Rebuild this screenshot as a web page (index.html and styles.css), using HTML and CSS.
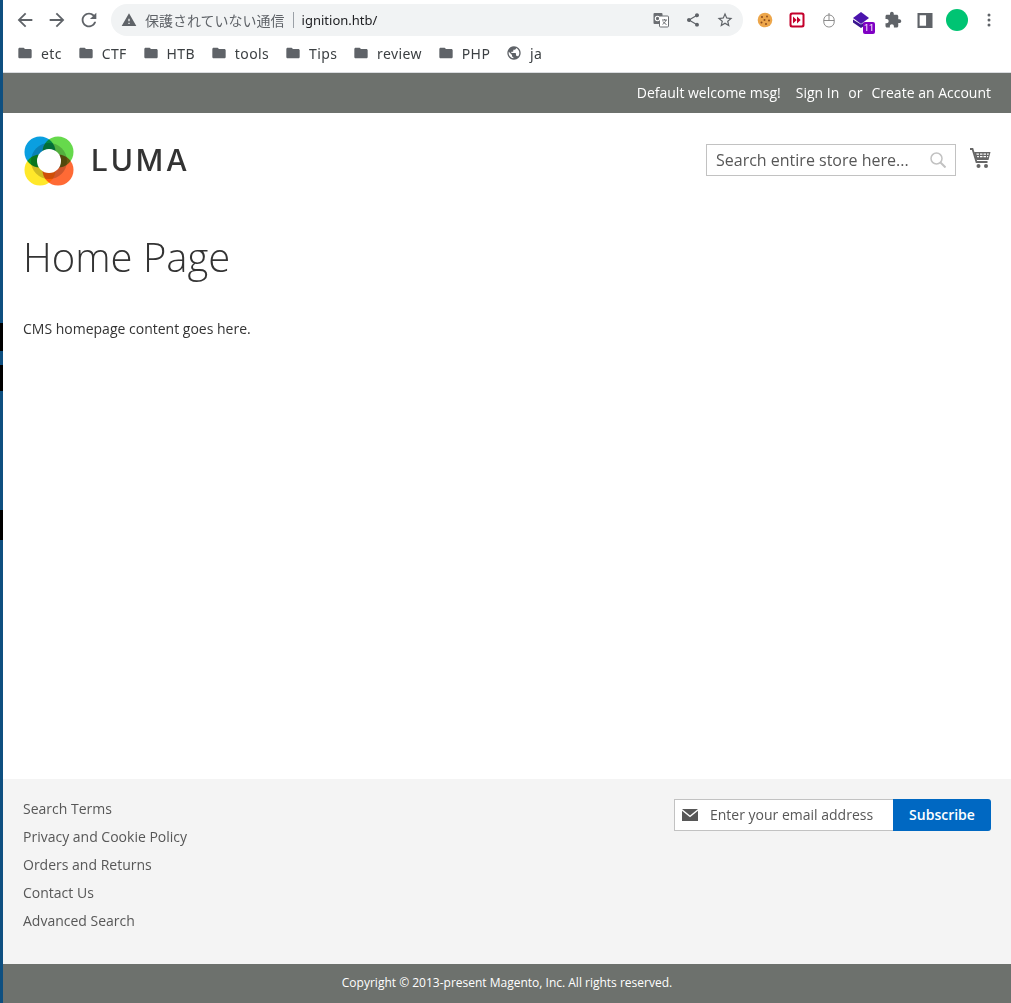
FILE: index.html
```html
<!DOCTYPE html>
<html lang="ja">
<head>
<meta charset="utf-8">
<title>Home Page</title>
<link rel="stylesheet" href="styles.css">
</head>
<body>
<div class="desktop-edge">
  <div class="edge-blue e1"></div><div class="edge-black e2"></div><div class="edge-blue e3"></div><div class="edge-black e4"></div><div class="edge-blue e5"></div><div class="edge-black e6"></div><div class="edge-blue e7"></div>
</div>
<div class="window">
  <div class="chrome">
    <div class="toolbar">
      <span class="slot"><svg class="ic22" viewBox="0 0 24 24"><path d="M20 11H7.830l5.590-5.590L12 4l-8 8 8 8 1.410-1.410L7.830 13H20v-2z"/></svg></span>
      <span class="slot"><svg class="ic22" viewBox="0 0 24 24"><path d="M12 4l-1.410 1.410L16.170 11H4v2h12.170l-5.580 5.590L12 20l8-8z"/></svg></span>
      <span class="slot"><svg class="ic22" viewBox="0 0 24 24"><path d="M17.650 6.350C16.200 4.900 14.210 4 12 4c-4.420 0-7.990 3.580-7.990 8s3.570 8 7.990 8c3.730 0 6.840-2.550 7.730-6h-2.080c-.82 2.330-3.040 4-5.650 4-3.310 0-6-2.690-6-6s2.690-6 6-6c1.660 0 3.140.69 4.220 1.780L13 11h7V4l-2.350 2.350z"/></svg></span>
      <div class="omnibox">
        <svg class="ic16" viewBox="0 0 24 24"><path d="M1 21h22L12 2 1 21zm12-3h-2v-2h2v2zm0-4h-2v-4h2v4z"/></svg>
        <span class="insecure">保護されていない通信</span>
        <span class="sep"></span>
        <span class="url">ignition.htb/</span>
        <span class="omni-actions">
          <span class="slot"><svg class="ic16" viewBox="0 0 16 16"><rect x="0.500" y="1" width="9" height="11" rx="1" fill="#6b6e72"/><rect x="6.500" y="4" width="9" height="11" rx="1" fill="#fff" stroke="#6b6e72"/><circle cx="4.500" cy="6.500" r="2.200" fill="none" stroke="#fff" stroke-width="1.100"/><path d="M9 8h5M11.500 7v1M13 8c-.6 2-2 3.500-3.500 4.300M10 9.500c.8 1.400 2 2.400 3.500 3" fill="none" stroke="#6b6e72"/></svg></span>
          <span class="slot"><svg class="ic16" viewBox="0 0 24 24"><path d="M18 16.080c-.76 0-1.440.3-1.960.77L8.910 12.700c.05-.23.09-.46.09-.7s-.04-.47-.09-.7l7.050-4.110c.54.5 1.250.81 2.040.81 1.660 0 3-1.340 3-3s-1.340-3-3-3-3 1.340-3 3c0 .24.04.47.09.7L8.040 9.810C7.500 9.310 6.790 9 6 9c-1.660 0-3 1.340-3 3s1.340 3 3 3c.79 0 1.500-.31 2.040-.81l7.120 4.160c-.05.21-.08.43-.08.65 0 1.610 1.310 2.920 2.920 2.920s2.920-1.310 2.920-2.920-1.310-2.920-2.920-2.920z"/></svg></span>
          <span class="slot"><svg class="ic18" viewBox="0 0 24 24"><path d="M22 9.240l-7.190-.62L12 2 9.190 8.630 2 9.240l5.460 4.730L5.820 21 12 17.270 18.180 21l-1.630-7.030L22 9.240zM12 15.400l-3.760 2.270 1-4.280-3.320-2.880 4.380-.38L12 6.100l1.710 4.040 4.380.38-3.320 2.880 1 4.280L12 15.400z"/></svg></span>
        </span>
      </div>
      <div class="extensions">
        <span class="slot"><svg class="ic16" viewBox="0 0 16 16"><circle cx="8" cy="8" r="7.300" fill="#eda64a"/><g fill="#8a4a1c"><circle cx="5" cy="5" r="1"/><circle cx="10" cy="4.500" r="0.900"/><circle cx="7.500" cy="8" r="1"/><circle cx="12" cy="8.500" r="1"/><circle cx="4.500" cy="10.500" r="1"/><circle cx="9" cy="12" r="1"/></g></svg></span>
        <span class="slot"><svg class="ic16" viewBox="0 0 16 16"><rect x="0.500" y="0.500" width="15" height="15" rx="2.500" fill="#c4002b"/><rect x="2.500" y="2.500" width="11" height="11" rx="1" fill="#fff"/><path d="M4 4.500l3.700 3.500L4 11.500zM8 4.500l3.700 3.500L8 11.500z" fill="#c4002b"/></svg></span>
        <span class="slot"><svg class="ic16" viewBox="0 0 16 16"><rect x="2.800" y="3" width="10.400" height="12" rx="5" fill="#fff" stroke="#808080" stroke-width="0.900"/><path d="M2.800 8.500h10.400M8 1v7.500" fill="none" stroke="#808080" stroke-width="0.900"/></svg></span>
        <span class="slot">
          <svg class="ic18" viewBox="0 0 18 18"><path d="M1 7l8-6 8 6-8 6z" fill="#4b14ad"/><path d="M1 8.500v3l8 5.500 3-2v-3.500l-3 2z" fill="#3a1590"/></svg>
          <span class="ext-badge">11</span>
        </span>
        <span class="slot"><svg class="ic18" viewBox="0 0 24 24"><path d="M20.500 11H19V7c0-1.100-.9-2-2-2h-4V3.500C13 2.120 11.880 1 10.500 1S8 2.120 8 3.500V5H4c-1.100 0-1.990.9-1.990 2v3.800H3.500c1.490 0 2.700 1.210 2.700 2.700s-1.210 2.700-2.700 2.700H2V20c0 1.100.9 2 2 2h3.800v-1.500c0-1.490 1.210-2.700 2.700-2.700 1.490 0 2.700 1.210 2.700 2.700V22H17c1.100 0 2-.9 2-2v-4h1.500c1.380 0 2.500-1.120 2.500-2.500S21.880 11 20.500 11z"/></svg></span>
        <span class="slot"><svg class="ic14" viewBox="0 0 14 14"><path fill-rule="evenodd" d="M0 0h14v14H0zM2 2v10h6V2z"/></svg></span>
        <span class="slot"><span class="avatar"></span></span>
        <span class="slot"><svg class="ic16" viewBox="0 0 16 16"><circle cx="8" cy="3" r="1.500"/><circle cx="8" cy="8" r="1.500"/><circle cx="8" cy="13" r="1.500"/></svg></span>
      </div>
    </div>
    <div class="bookmarks">
      <span class="bm"><svg class="ic16" viewBox="0 0 24 24"><path d="M10 4H4c-1.100 0-1.990.9-1.990 2L2 18c0 1.100.9 2 2 2h16c1.100 0 2-.9 2-2V8c0-1.100-.9-2-2-2h-8l-2-2z"/></svg>etc</span>
      <span class="bm"><svg class="ic16" viewBox="0 0 24 24"><path d="M10 4H4c-1.100 0-1.990.9-1.990 2L2 18c0 1.100.9 2 2 2h16c1.100 0 2-.9 2-2V8c0-1.100-.9-2-2-2h-8l-2-2z"/></svg>CTF</span>
      <span class="bm"><svg class="ic16" viewBox="0 0 24 24"><path d="M10 4H4c-1.100 0-1.990.9-1.990 2L2 18c0 1.100.9 2 2 2h16c1.100 0 2-.9 2-2V8c0-1.100-.9-2-2-2h-8l-2-2z"/></svg>HTB</span>
      <span class="bm"><svg class="ic16" viewBox="0 0 24 24"><path d="M10 4H4c-1.100 0-1.990.9-1.990 2L2 18c0 1.100.9 2 2 2h16c1.100 0 2-.9 2-2V8c0-1.100-.9-2-2-2h-8l-2-2z"/></svg>tools</span>
      <span class="bm"><svg class="ic16" viewBox="0 0 24 24"><path d="M10 4H4c-1.100 0-1.990.9-1.990 2L2 18c0 1.100.9 2 2 2h16c1.100 0 2-.9 2-2V8c0-1.100-.9-2-2-2h-8l-2-2z"/></svg>Tips</span>
      <span class="bm"><svg class="ic16" viewBox="0 0 24 24"><path d="M10 4H4c-1.100 0-1.990.9-1.990 2L2 18c0 1.100.9 2 2 2h16c1.100 0 2-.9 2-2V8c0-1.100-.9-2-2-2h-8l-2-2z"/></svg>review</span>
      <span class="bm"><svg class="ic16" viewBox="0 0 24 24"><path d="M10 4H4c-1.100 0-1.990.9-1.990 2L2 18c0 1.100.9 2 2 2h16c1.100 0 2-.9 2-2V8c0-1.100-.9-2-2-2h-8l-2-2z"/></svg>PHP</span>
      <span class="bm"><svg class="ic16" viewBox="0 0 24 24"><path d="M12 2C6.480 2 2 6.480 2 12s4.480 10 10 10 10-4.480 10-10S17.520 2 12 2zm-1 17.930c-3.950-.49-7-3.850-7-7.930 0-.62.08-1.210.21-1.790L9 15v1c0 1.100.9 2 2 2v1.930zm6.900-2.540c-.26-.81-1-1.390-1.900-1.390h-1v-3c0-.55-.45-1-1-1H8v-2h2c.55 0 1-.45 1-1V7h2c1.100 0 2-.9 2-2v-.41c2.930 1.190 5 4.060 5 7.410 0 2.080-.8 3.970-2.100 5.390z"/></svg>ja</span>
    </div>
  </div>
  <div class="page">
    <div class="panel">
      <span class="welcome">Default welcome msg!</span>
      <a class="panel-link">Sign In</a>
      <span class="or">or</span>
      <a class="panel-link">Create an Account</a>
    </div>
    <header class="header">
      <div class="logo">
        <svg class="logo-mark" viewBox="0 0 50 50">
          <g class="petals">
            <circle cx="16" cy="16" r="15.500" fill="#0a9fe0"/>
            <circle cx="34" cy="16" r="15.500" fill="#66d94c"/>
            <circle cx="16" cy="34" r="15.500" fill="#ffe82a"/>
            <circle cx="34" cy="34" r="15.500" fill="#ff6a35"/>
            <circle cx="25" cy="25" r="18" fill="#cfcfcf"/>
          </g>
          <circle cx="25" cy="25" r="12" fill="#fff"/>
        </svg>
        <span class="logo-text">LUMA</span>
      </div>
      <div class="header-tools">
        <div class="search">
          <input class="search-input" type="text" placeholder="Search entire store here...">
          <svg class="search-icon" viewBox="0 0 16 16"><circle cx="6.500" cy="6.500" r="5.500" fill="none" stroke="#c2c2c2" stroke-width="1.500"/><path d="M10.500 10.500l5 5" stroke="#c2c2c2" stroke-width="2"/></svg>
        </div>
        <svg class="cart" viewBox="0 0 21 21"><path d="M0 1h2.500l4 13h11" fill="none" stroke="#666" stroke-width="1.800"/><path fill-rule="evenodd" fill="#666" d="M4 4H20.500l-2 8H6.500zM6.300 5.500l.3 1.300h2.300V5.500zM10 5.500v1.300h2.500V5.500zM13.500 5.500v1.300h2.500V5.500zM17 5.500v1.300h1.600l.3-1.300zM7 8l.3 1.300h1.600V8zM10 8v1.300h2.500V8zM13.500 8v1.300h2.500V8zM17 8v1.300h1l.3-1.300z"/><circle cx="8.500" cy="18" r="2" fill="#666"/><circle cx="16" cy="18" r="2" fill="#666"/></svg>
      </div>
    </header>
    <main class="main">
      <h1 class="title">Home Page</h1>
      <p class="content">CMS homepage content goes here.</p>
    </main>
    <footer class="footer">
      <ul class="footer-links">
        <li>Search Terms</li>
        <li>Privacy and Cookie Policy</li>
        <li>Orders and Returns</li>
        <li>Contact Us</li>
        <li>Advanced Search</li>
      </ul>
      <form class="newsletter">
        <div class="email">
          <svg class="mail" viewBox="0 0 16 12"><path d="M0 0h16L8 6.500zM0 1.800V12h16V1.800L8 8.300z"/></svg>
          <input class="email-input" type="text" placeholder="Enter your email address">
        </div>
        <button class="subscribe" type="button">Subscribe</button>
      </form>
    </footer>
    <div class="copyright">Copyright © 2013-present Magento, Inc. All rights reserved.</div>
  </div>
</div>
</body>
</html>
```

FILE: styles.css
```css
* { box-sizing: border-box; }
html, body { margin: 0; height: 100%; }
body {
  display: flex;
  overflow: hidden;
  background: #fff;
  font-family: "Open Sans", "Noto Sans", sans-serif;
  font-size: 14px;
  color: #333;
}
svg { display: block; fill: #5f6368; flex: none; }

.desktop-edge { width: 3px; flex: none; display: flex; flex-direction: column; }
.edge-blue { background: #0e4f80; }
.edge-black { background: #000; }
.e1 { height: 323px; }
.e2 { height: 28px; }
.e3 { height: 14px; }
.e4 { height: 26px; }
.e5 { height: 119px; }
.e6 { height: 30px; }
.e7 { flex: 1; }

.window { flex: 1; min-width: 0; display: flex; flex-direction: column; }

.chrome { height: 73px; flex: none; border-bottom: 1px solid #dadce0; }
.toolbar { height: 36px; padding: 4px 6px 0; display: flex; align-items: center; }
.slot { position: relative; width: 32px; height: 32px; display: flex; align-items: center; justify-content: center; flex: none; }
.ic22 { width: 22px; height: 22px; }
.ic18 { width: 18px; height: 18px; }
.ic16 { width: 16px; height: 16px; }
.ic14 { width: 16px; height: 15px; }

.omnibox {
  margin-left: 6px;
  width: 632px;
  height: 32px;
  border-radius: 16px;
  background: #f1f3f4;
  display: flex;
  align-items: center;
  padding: 0 2px 0 10px;
  font-family: "Noto Sans", "Noto Sans CJK JP", sans-serif;
  font-size: 13px;
}
.insecure { margin-left: 8px; color: #5f6368; font-size: 14px; font-family: "Noto Sans CJK JP", sans-serif; }
.sep { width: 1px; height: 16px; background: #9aa0a6; margin: 0 8px; }
.url { color: #202124; }
.omni-actions { margin-left: auto; display: flex; }

.extensions { margin-left: 6px; display: flex; }
.ext-badge {
  position: absolute;
  left: 18px;
  top: 18px;
  width: 12px;
  height: 12px;
  border-radius: 2px;
  background: #8000c4;
  color: #fff;
  font: 9px/12px "Roboto", sans-serif;
  text-align: center;
}
.avatar { width: 22px; height: 22px; border-radius: 50%; background: #00c473; }

.bookmarks {
  height: 36px;
  padding: 0 0 2px 14px;
  display: flex;
  align-items: center;
  gap: 15.800px;
  font-family: "Noto Sans", sans-serif;
  font-size: 14px;
  letter-spacing: 0.400px;
  color: #3c4043;
}
.bm { display: flex; align-items: center; gap: 8px; }

.page { flex: 1; min-height: 0; display: flex; flex-direction: column; }

.panel {
  height: 40px;
  flex: none;
  background: #6d716d;
  color: #fff;
  display: flex;
  align-items: center;
  justify-content: flex-end;
  padding: 0 20px 2px 0;
  gap: 9px;
}
.welcome { margin-right: 6px; }

.header {
  flex: none;
  display: flex;
  justify-content: space-between;
  padding: 23px 20px 0;
}
.logo { display: flex; align-items: center; gap: 17px; margin-left: 1px; }
.logo-mark { width: 50px; height: 50px; }
.petals circle { mix-blend-mode: multiply; }
.petals { isolation: isolate; }
.logo-text { font-family: "Inter", sans-serif; font-weight: 500; font-size: 30px; letter-spacing: 2.800px; color: #333; line-height: 1; margin-bottom: 2px; }

.header-tools { display: flex; align-items: flex-start; margin-top: 8px; gap: 14px; }
.search { position: relative; width: 250px; height: 32px; }
.search-input {
  width: 100%;
  height: 100%;
  border: 1px solid #c2c2c2;
  padding: 0 38px 0 9px;
  font: 16px "Open Sans", sans-serif;
  color: #575757;
  background: #fff;
  outline: none;
}
.search-input::placeholder { color: #575757; opacity: 1; }
.search-icon { position: absolute; right: 10px; top: 8px; width: 16px; height: 16px; }
.cart { width: 21px; height: 21px; margin-top: 4px; }

.main { flex: 1; padding: 0 20px; }
.title { margin: 46px 0 0; font-family: "Open Sans", sans-serif; font-weight: 300; font-size: 40px; line-height: 50px; color: #333; }
.content { margin: 37px 0 0; line-height: 20px; }

.footer {
  height: 185px;
  flex: none;
  background: #f4f4f4;
  display: flex;
  justify-content: space-between;
  padding: 16px 20px 0;
  color: #575757;
}
.footer-links { list-style: none; margin: 0; padding: 0; }
.footer-links li { height: 28px; line-height: 28px; }
.newsletter { display: flex; margin: 4px 0 0; height: 32px; }
.email { width: 219px; display: flex; align-items: center; background: #fff; border: 1px solid #c2c2c2; border-right: 0; padding-left: 7px; }
.mail { width: 16px; height: 12px; fill: #575757; }
.email-input { flex: 1; min-width: 0; border: 0; background: transparent; outline: none; margin: 0 0 2px 12px; padding: 0; font: 14px "Open Sans", sans-serif; color: #575757; }
.email-input::placeholder { color: #575757; opacity: 1; }
.subscribe {
  width: 98px;
  border: 0;
  border-radius: 0 3px 3px 0;
  background: #0068c2;
  color: #fff;
  font: 600 14px "Open Sans", sans-serif;
  padding: 0 0 2px;
}

.copyright {
  height: 39px;
  flex: none;
  background: #6d716d;
  color: #fff;
  font-size: 12px;
  line-height: 37px;
  text-align: center;
}
```
